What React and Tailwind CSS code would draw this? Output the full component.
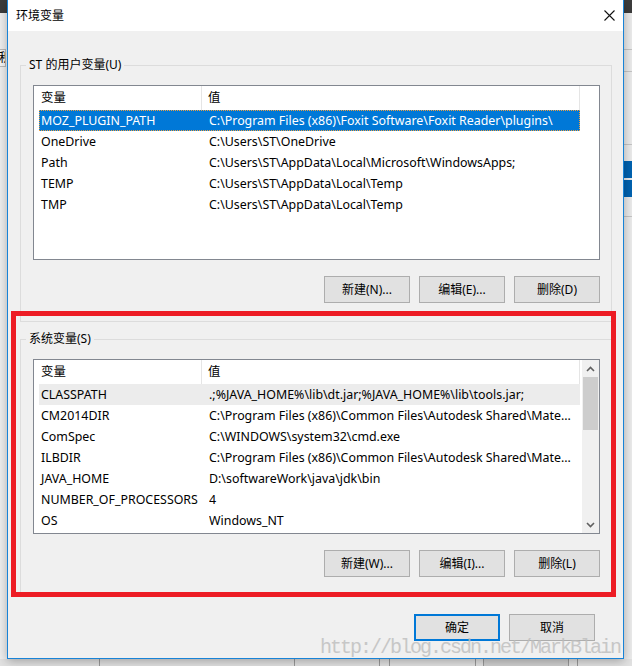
import React from "react";

const FONT = "font-['Noto_Sans','Noto_Sans_CJK_SC',sans-serif]";

const userRows = [
  ["MOZ_PLUGIN_PATH", "C:\\Program Files (x86)\\Foxit Software\\Foxit Reader\\plugins\\"],
  ["OneDrive", "C:\\Users\\ST\\OneDrive"],
  ["Path", "C:\\Users\\ST\\AppData\\Local\\Microsoft\\WindowsApps;"],
  ["TEMP", "C:\\Users\\ST\\AppData\\Local\\Temp"],
  ["TMP", "C:\\Users\\ST\\AppData\\Local\\Temp"],
];

const sysRows = [
  ["CLASSPATH", ".;%JAVA_HOME%\\lib\\dt.jar;%JAVA_HOME%\\lib\\tools.jar;"],
  ["CM2014DIR", "C:\\Program Files (x86)\\Common Files\\Autodesk Shared\\Mate..."],
  ["ComSpec", "C:\\WINDOWS\\system32\\cmd.exe"],
  ["ILBDIR", "C:\\Program Files (x86)\\Common Files\\Autodesk Shared\\Mate..."],
  ["JAVA_HOME", "D:\\softwareWork\\java\\jdk\\bin"],
  ["NUMBER_OF_PROCESSORS", "4"],
  ["OS", "Windows_NT"],
];

function Btn({ children, primary }) {
  return (
    <div
      className={
        "w-[86px] h-[27px] flex items-center justify-center bg-[#e1e1e1] text-[12px] text-black " +
        (primary ? "border-2 border-[#0078d7]" : "border border-[#adadad]")
      }
    >
      {children}
    </div>
  );
}

function Header() {
  return (
    <div className="h-[24px] flex items-center text-[12.4px] text-black shrink-0">
      <div className="w-[168px] h-full pl-[7px] flex items-center border-r border-[#e5e5e5]">变量</div>
      <div className="w-[378px] h-full pl-[6px] flex items-center border-r border-[#e5e5e5]">值</div>
    </div>
  );
}

function Row({ name, value, variant }) {
  let cls = "h-[21px] ml-[5px] w-[541px] flex items-center pt-px text-[12.4px] whitespace-nowrap ";
  if (variant === "sel") cls += "bg-[#0078d7] text-white outline-1 outline-dotted outline-[#f0a040] -outline-offset-1";
  else if (variant === "gray") cls += "bg-[#ececec] text-black";
  else cls += "text-black";
  return (
    <div className={cls}>
      <div className="w-[170px] pl-[2px] shrink-0 overflow-hidden">{name}</div>
      <div className="flex-1 overflow-hidden">{value}</div>
    </div>
  );
}

function Chevron({ up }) {
  return (
    <svg width="9" height="6" viewBox="0 0 9 6">
      <polyline
        points={up ? "1,5 4.5,1.5 8,5" : "1,1 4.5,4.5 8,1"}
        fill="none"
        stroke="#606060"
        strokeWidth="1.6"
      />
    </svg>
  );
}

function GroupBox({ label, children, top }) {
  return (
    <div className={"relative ml-[12px] w-[592px] h-[257px] border border-[#dcdcdc] pt-[19px] pl-[12px] flex flex-col " + top}>
      <span className="absolute left-[5px] top-[-9px] px-[3px] bg-[#f0f0f0] text-[12px] leading-[16px] text-black">
        {label}
      </span>
      {children}
    </div>
  );
}

function Buttons({ labels }) {
  return (
    <div className="mt-[16px] w-[567px] flex justify-end gap-[9px]">
      {labels.map((l) => (
        <Btn key={l}>{l}</Btn>
      ))}
    </div>
  );
}

export default function App() {
  return (
    <div className={"relative w-[632px] h-[666px] overflow-hidden bg-[#e9e9e9] " + FONT}>
      {/* background windows */}
      <div className="absolute left-0 top-0 w-[632px] h-[13px] bg-[#3c3c3c]" />
      <div className="absolute left-0 top-[13px] w-[7px] h-[653px] bg-[#f0f0f0]" />
      <div className="absolute left-[-14px] top-[49px] w-[20px] h-[18px] border border-[#b9b9b9] bg-[#f7f7f7] overflow-hidden text-[12px] leading-[16px] text-black whitespace-nowrap">
        面积
      </div>
      <div className="absolute left-[624px] top-[13px] w-[8px] h-[653px] bg-[#ececec]" />
      <div className="absolute left-[624px] top-[49px] w-[8px] h-px bg-[#c6c6c6]" />
      <div className="absolute left-[624px] top-[71px] w-[8px] h-px bg-[#c6c6c6]" />
      <div className="absolute left-[624px] top-[144px] w-[8px] h-px bg-[#c6c6c6]" />
      <div className="absolute left-[624px] top-[161px] w-[8px] h-[17px] bg-[#0063b1]" />
      <div className="absolute left-[624px] top-[180px] w-[8px] h-[17px] bg-[#0063b1]" />
      <div className="absolute left-[624px] top-[216px] w-[8px] h-px bg-[#c6c6c6]" />
      <div className="absolute left-0 top-[659px] w-[632px] h-[7px] bg-[#e2e2e2]" />
      <div className="absolute left-[99px] top-[659px] w-px h-[7px] bg-[#9a9a9a]" />
      <div className="absolute left-[294px] top-[659px] w-px h-[7px] bg-[#9a9a9a]" />
      <div className="absolute left-[379px] top-[659px] w-px h-[7px] bg-[#9a9a9a]" />
      <div className="absolute left-[389px] top-[659px] w-px h-[7px] bg-[#9a9a9a]" />
      <div className="absolute left-[475px] top-[659px] w-px h-[7px] bg-[#9a9a9a]" />
      <div className="absolute left-[483px] top-[659px] w-[86px] h-[7px] bg-[#d0d0d0] border-l border-r border-[#9a9a9a]" />
      <div className="absolute left-[577px] top-[659px] w-px h-[7px] bg-[#9a9a9a]" />

      {/* dialog */}
      <div className="absolute left-[7px] top-0 w-[617px] h-[659px] border-l border-r border-b border-[#1883d7] bg-[#f0f0f0] flex flex-col shadow-[0_2px_10px_rgba(0,0,0,0.3)]">
        <div className="h-[31px] bg-white flex items-center justify-between pl-[8px] pr-[8px] shrink-0">
          <span className="text-[12px] text-black">环境变量</span>
          <svg width="11" height="11" viewBox="0 0 11 11">
            <path d="M0.5 0.5 L10.5 10.5 M10.5 0.5 L0.5 10.5" stroke="#111" strokeWidth="1.1" fill="none" />
          </svg>
        </div>

        <GroupBox label="ST 的用户变量(U)" top="mt-[34px]">
          <div className="w-[567px] h-[175px] border border-[#828790] bg-white flex flex-col overflow-hidden">
            <Header />
            {userRows.map((r, i) => (
              <Row key={r[0]} name={r[0]} value={r[1]} variant={i === 0 ? "sel" : ""} />
            ))}
          </div>
          <Buttons labels={["新建(N)...", "编辑(E)...", "删除(D)"]} />
        </GroupBox>

        <GroupBox label="系统变量(S)" top="mt-[17px]">
          <div className="w-[567px] h-[175px] border border-[#828790] bg-white flex overflow-hidden">
            <div className="w-[548px] flex flex-col">
              <Header />
              {sysRows.map((r, i) => (
                <Row key={r[0]} name={r[0]} value={r[1]} variant={i === 0 ? "gray" : ""} />
              ))}
            </div>
            <div className="w-[17px] h-full bg-[#f0f0f0] flex flex-col">
              <div className="h-[17px] flex items-center justify-center">
                <Chevron up />
              </div>
              <div className="mx-[1px] h-[53px] bg-[#cdcdcd]" />
              <div className="flex-1" />
              <div className="h-[17px] flex items-center justify-center">
                <Chevron />
              </div>
            </div>
          </div>
          <Buttons labels={["新建(W)...", "编辑(I)...", "删除(L)"]} />
        </GroupBox>

        <div className="mt-[18px] mr-[28px] flex justify-end gap-[9px]">
          <Btn primary>确定</Btn>
          <Btn>取消</Btn>
        </div>
      </div>

      {/* red annotation */}
      <div className="absolute left-[11px] top-[311px] w-[605px] h-[286px] border-[5px] border-[#ed1c24]" />

      {/* watermark */}
      <div className="absolute left-[320px] top-[637px] text-[20px] leading-[22px] tracking-[-2px] font-['Liberation_Mono',monospace] text-[#bdbdbd] opacity-80 whitespace-nowrap">
        http://blog.csdn.net/MarkBlain
      </div>
    </div>
  );
}
